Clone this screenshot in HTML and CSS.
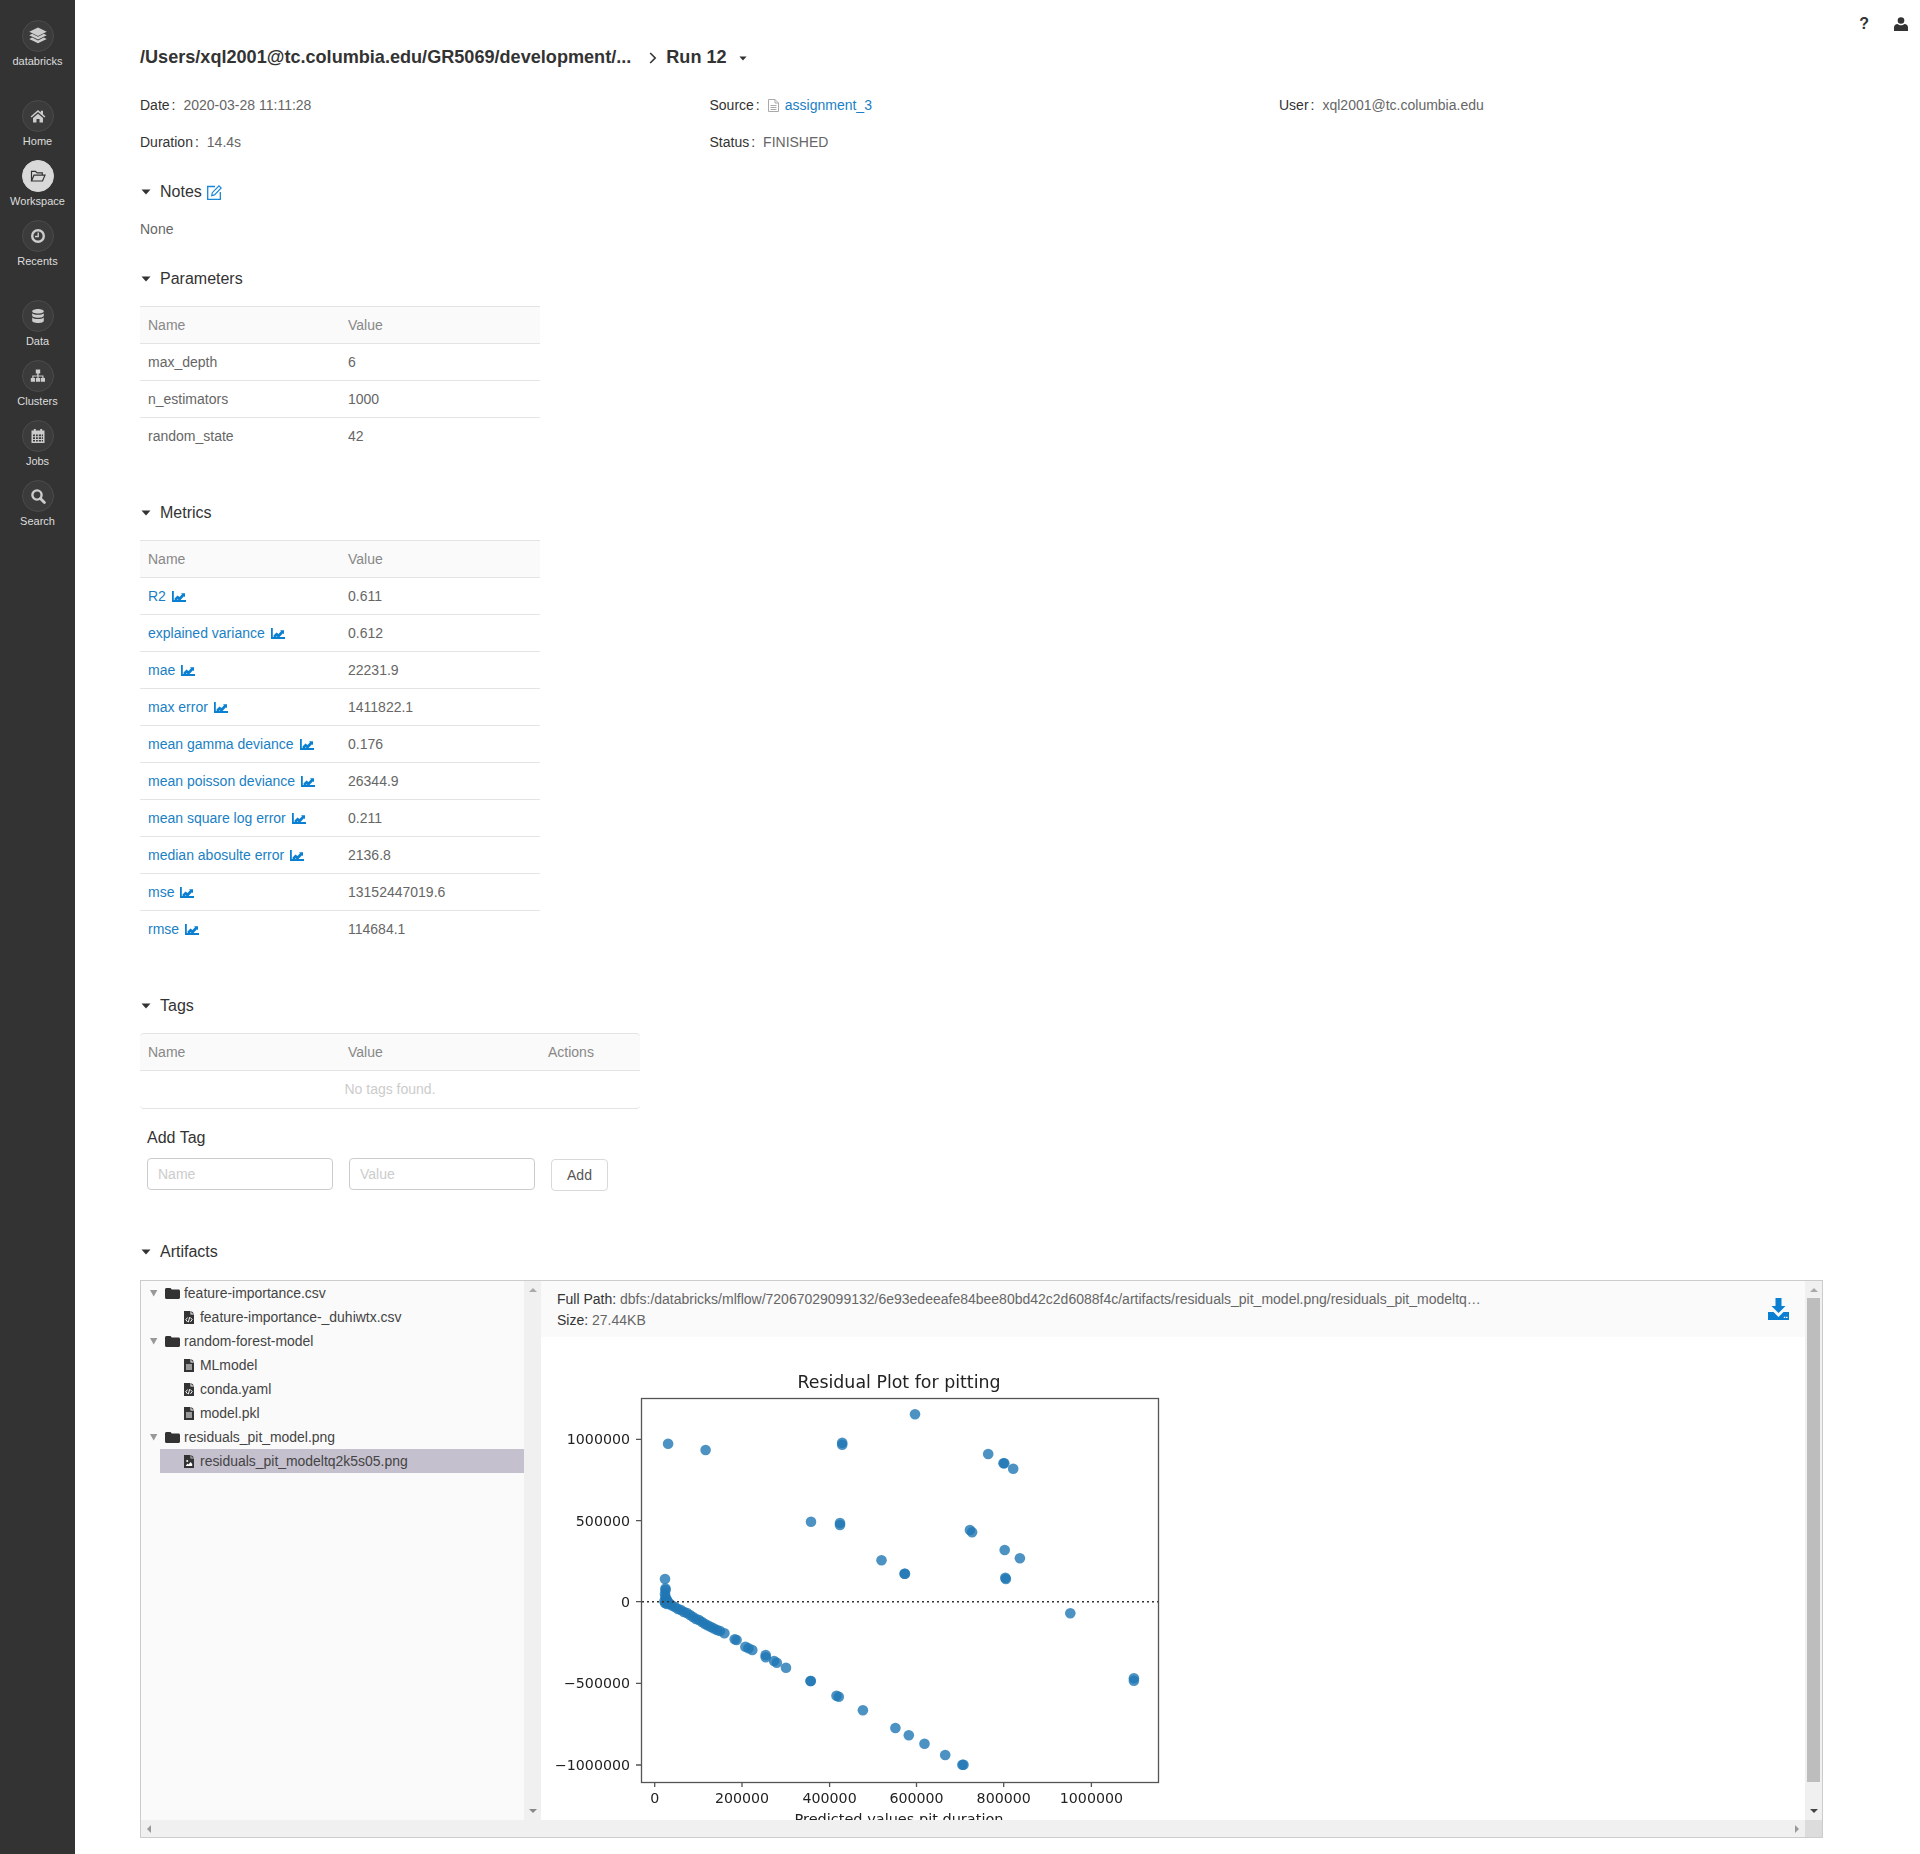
FILE: index.html
```html
<!DOCTYPE html>
<html lang="en">
<head>
    <meta charset="UTF-8">
    <title>Run 12 - MLflow</title>
    <link rel="stylesheet" href="styles.css">
</head>
<body>
    <svg class="sprite" aria-hidden="true">
        <symbol id="i-chart" viewBox="0 0 14 11">
            <path d="M.9 0v10H14" fill="none" stroke="currentColor" stroke-width="1.800"/>
            <path d="M2.500 8.500V7.400l3-3 2 1.700 2.500-2.800-1-1h4v4l-1-1-4.400 4.700-2-1.700-1.600 1.700z" fill="currentColor"/>
        </symbol>
        <symbol id="i-caret" viewBox="0 0 10 6">
            <path d="M.5.5h9L5 5.500z" fill="currentColor"/>
        </symbol>
        <symbol id="i-folder" viewBox="0 0 15 11">
            <path d="M1.500 0h4l1.300 1.400h6.700c.8 0 1.500.7 1.500 1.500v6.600c0 .8-.7 1.500-1.500 1.500h-12C.7 11 0 10.300 0 9.500v-8C0 .7.700 0 1.500 0z" fill="currentColor"/>
        </symbol>
        <symbol id="i-file-code" viewBox="0 0 10 13">
            <path d="M0 0h6.500v3.500H10V13H0zM7.400 0 10 2.600H7.400z" fill="currentColor"/>
            <path d="M3.600 6.500 1.800 8.700l1.800 2.200M6.400 6.500l1.800 2.200-1.800 2.200M5.600 6.200l-1.200 5" fill="none" stroke="#fff" stroke-width="1"/>
        </symbol>
        <symbol id="i-file-text" viewBox="0 0 10 13">
            <path d="M0 0h6.500v3.500H10V13H0zM7.400 0 10 2.600H7.400z" fill="currentColor"/>
            <path d="M2 6h6M2 8h6M2 10h6" stroke="#fff" stroke-width="1"/>
        </symbol>
        <symbol id="i-file-image" viewBox="0 0 10 13">
            <path d="M0 0h6.500v3.500H10V13H0zM7.400 0 10 2.600H7.400z" fill="currentColor"/>
            <path d="M1.800 11h6.400V9L6.600 7 4.500 9.500 3.400 8.500z" fill="#fff"/>
            <circle cx="3.200" cy="6" r="1" fill="#fff"/>
        </symbol>
    </svg>

    <nav class="sidebar">
        <a class="nav-item nav-logo">
            <span class="nav-circle">
                <svg viewBox="0 0 16 16"><path d="M8 .5 15.800 4.300 8 8.100.2 4.300zM.2 7.300 2.800 6 8 8.600 13.200 6l2.600 1.300L8 11.100zM.2 10.600l2.600-1.300L8 11.900l5.200-2.600 2.600 1.300L8 14.500z"/></svg>
            </span>
            databricks
        </a>
        <a class="nav-item">
            <span class="nav-circle">
                <svg viewBox="0 0 16 16"><path d="M8 2 .6 8.400l1 1.100L8 4l6.400 5.500 1-1.100L13 6.300V2.700h-2.200v1.700zM3 10 8 5.700l5 4.300v4.500H9.500V11h-3v3.500H3z"/></svg>
            </span>
            Home
        </a>
        <a class="nav-item active">
            <span class="nav-circle">
                <svg viewBox="0 0 16 16"><path d="M1.500 13V3.300h4l1.500 1.500h5.300v2.400M1.500 13 4 7.200h11L12.500 13z" fill="none" stroke="currentColor" stroke-width="1.200"/></svg>
            </span>
            Workspace
        </a>
        <a class="nav-item">
            <span class="nav-circle">
                <svg viewBox="0 0 16 16"><circle cx="8" cy="8" r="5.800" fill="none" stroke="currentColor" stroke-width="2.400"/><path d="M8.200 4.500v4H5" fill="none" stroke="currentColor" stroke-width="1.400"/></svg>
            </span>
            Recents
        </a>
        <a class="nav-item nav-gap">
            <span class="nav-circle">
                <svg viewBox="0 0 16 16"><path d="M8 1c3.200 0 5.800 1 5.800 2.300S11.200 5.600 8 5.600 2.200 4.600 2.200 3.300 4.800 1 8 1zM2.200 5.200C3.300 6.300 5.500 6.800 8 6.800s4.700-.5 5.800-1.600v2.300C13.800 8.800 11.200 9.800 8 9.800S2.200 8.800 2.200 7.500zM2.200 9.400c1.100 1.100 3.300 1.600 5.800 1.600s4.700-.5 5.800-1.600v3.300C13.800 14 11.200 15 8 15s-5.800-1-5.800-2.300z"/></svg>
            </span>
            Data
        </a>
        <a class="nav-item">
            <span class="nav-circle">
                <svg viewBox="0 0 16 16"><path d="M5.800 1.500h4.400v4H8.600v2h4.900v2.500h1.500v3.800h-4.200V10h1.500V8.600H8.600V10h1.500v3.800H5.900V10h1.500V8.600H3.500V10H5v3.800H.8V10h1.500V7.500h4.900v-2H5.800z"/></svg>
            </span>
            Clusters
        </a>
        <a class="nav-item">
            <span class="nav-circle">
                <svg viewBox="0 0 16 16"><path d="M1.500 2.500h2.300V1h2v1.500h4.400V1h2v1.500h2.300v12.500h-13zM3 6.500v1.800h2V6.500zm3 0v1.800h1.800V6.500zm2.800 0v1.800H11V6.500zm3 0v1.800H13V6.500zM3 9.300v1.800h2V9.300zm3 0v1.800h1.800V9.300zm2.800 0v1.800H11V9.300zm3 0v1.800H13V9.300zM3 12.100v1.500h2v-1.500zm3 0v1.500h1.800v-1.500zm2.800 0v1.500H11v-1.500zm3 0v1.500H13v-1.500z" fill-rule="evenodd"/></svg>
            </span>
            Jobs
        </a>
        <a class="nav-item">
            <span class="nav-circle">
                <svg viewBox="0 0 16 16"><circle cx="7" cy="7" r="4.600" fill="none" stroke="currentColor" stroke-width="2.400"/><path d="m10.400 10.400 4 4" stroke="currentColor" stroke-width="2.800" stroke-linecap="round"/></svg>
            </span>
            Search
        </a>
    </nav>

    <main class="main">
        <div class="top-bar">
            <span class="help-icon">?</span>
            <svg class="user-icon" viewBox="0 0 14 14"><circle cx="7" cy="3.500" r="3.300"/><path d="M0 14v-3.500C0 8.300 1.500 7 3.500 7c1 .9 2.200 1.300 3.500 1.300S9.500 7.900 10.500 7c2 0 3.500 1.300 3.500 3.500V14z"/></svg>
        </div>

        <div class="content">
            <!-- run title -->
            <div class="title-row">
                <h1 class="title">/Users/xql2001@tc.columbia.edu/GR5069/development/...</h1>
                <svg class="title-chevron" viewBox="0 0 8 12"><path d="m1.200 1 5 5-5 5" fill="none" stroke="currentColor" stroke-width="1.600"/></svg>
                <h1 class="title">Run 12</h1>
                <svg class="title-caret"><use href="#i-caret"/></svg>
            </div>

            <div class="descriptions">
                <div class="desc-item"><span class="desc-label">Date</span><span class="desc-value">2020-03-28 11:11:28</span></div>
                <div class="desc-item">
                    <span class="desc-label">Source</span>
                    <svg class="source-icon" viewBox="0 0 11 13"><path d="M.5.500h6.500l3.500 3.500v8.500H.5zM7 .5V4h3.500M2.500 6.500h6M2.500 8.500h6M2.500 10.500h6" fill="none" stroke="currentColor"/></svg>
                    <a class="link">assignment_3</a>
                </div>
                <div class="desc-item"><span class="desc-label">User</span><span class="desc-value">xql2001@tc.columbia.edu</span></div>
                <div class="desc-item"><span class="desc-label">Duration</span><span class="desc-value">14.4s</span></div>
                <div class="desc-item"><span class="desc-label">Status</span><span class="desc-value">FINISHED</span></div>
            </div>

            <h2 class="section-head head-notes">
                <svg class="head-caret"><use href="#i-caret"/></svg>Notes
                <svg class="edit-icon" viewBox="0 0 15 15"><path d="M8 1.500H.7v12.800h12.600V7" fill="none" stroke="currentColor" stroke-width="1.300"/><path d="m12 .8 2.200 2.200-6.700 6.900-2.800.7.600-2.900z" fill="none" stroke="currentColor" stroke-width="1.200"/></svg>
            </h2>
            <p class="notes-text">None</p>

            <h2 class="section-head head-params"><svg class="head-caret"><use href="#i-caret"/></svg>Parameters</h2>
            <table class="data-table">
                <tr><th>Name</th><th>Value</th></tr>
                <tr><td>max_depth</td><td>6</td></tr>
                <tr><td>n_estimators</td><td>1000</td></tr>
                <tr><td>random_state</td><td>42</td></tr>
            </table>

            <h2 class="section-head head-table"><svg class="head-caret"><use href="#i-caret"/></svg>Metrics</h2>
            <table class="data-table">
                <tr><th>Name</th><th>Value</th></tr>
                <tr><td><a class="link">R2<svg class="chart-icon"><use href="#i-chart"/></svg></a></td><td>0.611</td></tr>
                <tr><td><a class="link">explained variance<svg class="chart-icon"><use href="#i-chart"/></svg></a></td><td>0.612</td></tr>
                <tr><td><a class="link">mae<svg class="chart-icon"><use href="#i-chart"/></svg></a></td><td>22231.9</td></tr>
                <tr><td><a class="link">max error<svg class="chart-icon"><use href="#i-chart"/></svg></a></td><td>1411822.1</td></tr>
                <tr><td><a class="link">mean gamma deviance<svg class="chart-icon"><use href="#i-chart"/></svg></a></td><td>0.176</td></tr>
                <tr><td><a class="link">mean poisson deviance<svg class="chart-icon"><use href="#i-chart"/></svg></a></td><td>26344.9</td></tr>
                <tr><td><a class="link">mean square log error<svg class="chart-icon"><use href="#i-chart"/></svg></a></td><td>0.211</td></tr>
                <tr><td><a class="link">median abosulte error<svg class="chart-icon"><use href="#i-chart"/></svg></a></td><td>2136.8</td></tr>
                <tr><td><a class="link">mse<svg class="chart-icon"><use href="#i-chart"/></svg></a></td><td>13152447019.6</td></tr>
                <tr><td><a class="link">rmse<svg class="chart-icon"><use href="#i-chart"/></svg></a></td><td>114684.1</td></tr>
            </table>

            <h2 class="section-head head-table"><svg class="head-caret"><use href="#i-caret"/></svg>Tags</h2>
            <table class="data-table tags-table">
                <tr><th>Name</th><th>Value</th><th>Actions</th></tr>
                <tr><td class="empty-cell" colspan="3">No tags found.</td></tr>
            </table>

            <div class="add-tag">
                <h3 class="add-tag-title">Add Tag</h3>
                <form class="add-tag-form">
                    <input class="tag-input" type="text" placeholder="Name">
                    <input class="tag-input" type="text" placeholder="Value">
                    <button class="tag-btn" type="button">Add</button>
                </form>
            </div>

            <h2 class="section-head head-artifacts"><svg class="head-caret"><use href="#i-caret"/></svg>Artifacts</h2>
            <div class="artifacts">
                <div class="artifacts-top">
                    <ul class="tree">
                        <li class="tree-folder"><svg class="tree-caret" viewBox="0 0 8 8"><path d="M0 1h7.400L3.700 7.500z"/></svg><svg class="folder-icon"><use href="#i-folder"/></svg>feature-importance.csv</li>
                        <li class="tree-file"><svg class="file-icon"><use href="#i-file-code"/></svg>feature-importance-_duhiwtx.csv</li>
                        <li class="tree-folder"><svg class="tree-caret" viewBox="0 0 8 8"><path d="M0 1h7.400L3.700 7.500z"/></svg><svg class="folder-icon"><use href="#i-folder"/></svg>random-forest-model</li>
                        <li class="tree-file"><svg class="file-icon"><use href="#i-file-text"/></svg>MLmodel</li>
                        <li class="tree-file"><svg class="file-icon"><use href="#i-file-code"/></svg>conda.yaml</li>
                        <li class="tree-file"><svg class="file-icon"><use href="#i-file-text"/></svg>model.pkl</li>
                        <li class="tree-folder"><svg class="tree-caret" viewBox="0 0 8 8"><path d="M0 1h7.400L3.700 7.500z"/></svg><svg class="folder-icon"><use href="#i-folder"/></svg>residuals_pit_model.png</li>
                        <li class="tree-file selected"><svg class="file-icon"><use href="#i-file-image"/></svg>residuals_pit_modeltq2k5s05.png</li>
                    </ul>
                    <div class="scroll-v">
                        <span class="arrow-up"></span>
                        <span class="arrow-down"></span>
                    </div>

                    <div class="viewer">
                        <div class="viewer-head">
                            <div class="viewer-info">
                                <div><span class="viewer-label">Full Path:</span> dbfs:/databricks/mlflow/72067029099132/6e93edeeafe84bee80bd42c2d6088f4c/artifacts/residuals_pit_model.png/residuals_pit_modeltq…</div>
                                <div><span class="viewer-label">Size:</span> 27.44KB</div>
                            </div>
                            <svg class="download-icon" viewBox="0 0 21 22"><path d="M7.500 0h6v8h4l-7 7-7-7h4z"/><path d="M0 14h5.500l5 5 5-5H21v8H0z"/><path d="M15.800 19.300h1.500M18 19.300h1.500" stroke="#fff" stroke-width="1.200"/></svg>
                        </div>

                        <!-- viewBox uses page coordinates so points can be read off the plot -->
                        <svg class="plot" viewBox="541 1337 1264 483">
                            <text class="plot-title" x="899" y="1388">Residual Plot for pitting</text>
                            <g class="dots">
                                <circle cx="668.100" cy="1443.700"/><circle cx="705.600" cy="1450"/><circle cx="915" cy="1414.300"/>
                                <circle cx="842.200" cy="1442.700"/><circle cx="842.200" cy="1444.700"/>
                                <circle cx="988.200" cy="1454"/><circle cx="1003.500" cy="1463.300"/><circle cx="1004.300" cy="1463.300"/>
                                <circle cx="1013.200" cy="1468.700"/><circle cx="811" cy="1521.700"/>
                                <circle cx="840" cy="1523"/><circle cx="840" cy="1525"/>
                                <circle cx="969.900" cy="1530"/><circle cx="972.100" cy="1532.300"/>
                                <circle cx="1004.700" cy="1550"/><circle cx="1019.900" cy="1558.300"/><circle cx="881.500" cy="1560.300"/>
                                <circle cx="904.500" cy="1573.700"/><circle cx="905" cy="1573.700"/>
                                <circle cx="1005.300" cy="1577.700"/><circle cx="1005.900" cy="1579"/>
                                <circle cx="665" cy="1579"/><circle cx="665.500" cy="1588.500"/><circle cx="665.500" cy="1590"/>
                                <circle cx="665" cy="1594"/><circle cx="665.500" cy="1597"/><circle cx="666" cy="1599"/><circle cx="664.500" cy="1601"/>
                                <circle cx="666" cy="1602"/><circle cx="665" cy="1603"/><circle cx="667" cy="1600"/><circle cx="668" cy="1602"/><circle cx="667" cy="1604"/>
                                <circle cx="670" cy="1604"/><circle cx="672" cy="1605.500"/><circle cx="675" cy="1607"/><circle cx="678" cy="1609"/>
                                <circle cx="681" cy="1610"/><circle cx="684" cy="1612"/><circle cx="687" cy="1613"/><circle cx="690" cy="1615"/>
                                <circle cx="693" cy="1617"/><circle cx="696" cy="1619"/><circle cx="699" cy="1620"/><circle cx="702" cy="1622"/>
                                <circle cx="705" cy="1624"/><circle cx="708" cy="1625.500"/><circle cx="711" cy="1627"/><circle cx="714" cy="1628.500"/>
                                <circle cx="717" cy="1630"/><circle cx="720" cy="1631"/><circle cx="724.400" cy="1633.300"/>
                                <circle cx="734.700" cy="1639.300"/><circle cx="736.600" cy="1640"/>
                                <circle cx="745.400" cy="1646.700"/><circle cx="748.500" cy="1648.300"/><circle cx="752.300" cy="1650"/>
                                <circle cx="765.700" cy="1655"/><circle cx="765.700" cy="1657.300"/><circle cx="774.100" cy="1661"/><circle cx="776.800" cy="1662.700"/>
                                <circle cx="786" cy="1667.700"/><circle cx="810.500" cy="1681"/><circle cx="810.800" cy="1681"/>
                                <circle cx="836.500" cy="1695.700"/><circle cx="838.800" cy="1696.700"/><circle cx="862.900" cy="1710.300"/>
                                <circle cx="895.400" cy="1728"/><circle cx="908.800" cy="1735.300"/><circle cx="924.500" cy="1743.700"/><circle cx="945.200" cy="1755"/>
                                <circle cx="962.400" cy="1764.700"/><circle cx="963.500" cy="1764.700"/>
                                <circle cx="1070.300" cy="1613.300"/><circle cx="1133.900" cy="1678.300"/><circle cx="1133.900" cy="1680.700"/>
                            </g>
                            <line class="plot-zero" x1="642" y1="1601.700" x2="1158" y2="1601.700"/>
                            <rect class="plot-frame" x="641.500" y="1398.500" width="517" height="384"/>
                            <path class="plot-frame" d="M636 1439.300h5M636 1520.700h5M636 1601.700h5M636 1683.300h5M636 1765h5M654.700 1782v5M742 1782v5M829.600 1782v5M916.500 1782v5M1003.700 1782v5M1091.400 1782v5"/>
                            <g class="ticks-y">
                                <text x="630" y="1444.300">1000000</text>
                                <text x="630" y="1525.700">500000</text>
                                <text x="630" y="1606.700">0</text>
                                <text x="630" y="1688.300">−500000</text>
                                <text x="630" y="1770">−1000000</text>
                            </g>
                            <g class="ticks-x">
                                <text x="654.700" y="1803">0</text>
                                <text x="742" y="1803">200000</text>
                                <text x="829.600" y="1803">400000</text>
                                <text x="916.500" y="1803">600000</text>
                                <text x="1003.700" y="1803">800000</text>
                                <text x="1091.400" y="1803">1000000</text>
                                <text class="plot-xlabel" x="899" y="1823.500">Predicted values pit duration</text>
                            </g>
                        </svg>
                    </div>

                    <div class="scroll-v">
                        <span class="arrow-up"></span>
                        <span class="scroll-thumb"></span>
                        <span class="arrow-down arrow-dark"></span>
                    </div>
                </div>

                <div class="scroll-h">
                    <span class="arrow-left"></span>
                    <span class="arrow-right"></span>
                    <span class="scroll-corner"></span>
                </div>
            </div>
        </div>
    </main>
</body>
</html>
```

FILE: styles.css
```css
html, body {
    margin: 0;
    padding: 0;
}
body {
    display: flex;
    min-height: 100vh;
    font-family: "Liberation Sans", Arial, sans-serif;
    font-size: 14px;
    color: #666;
    background: #fff;
}
.sprite {
    display: none;
}
a {
    text-decoration: none;
}
.link {
    color: #1a7fc4;
}

/* left nav */
.sidebar {
    flex: 0 0 75px;
    background: #333;
    padding-top: 20px;
    box-sizing: border-box;
}
.nav-item {
    display: flex;
    flex-direction: column;
    align-items: center;
    height: 60px;
    color: #ddd;
    font-size: 11px;
    line-height: 18px;
}
.nav-logo {
    margin-bottom: 20px;
}
.nav-gap {
    margin-top: 20px;
}
.nav-circle {
    width: 32px;
    height: 32px;
    box-sizing: border-box;
    border: 1px solid #4b4b4b;
    border-radius: 50%;
    background: #3b3b3b;
    color: #ccc;
    display: flex;
    align-items: center;
    justify-content: center;
}
.nav-circle svg {
    width: 16px;
    height: 16px;
    fill: currentColor;
}
.nav-logo .nav-circle svg {
    width: 18px;
    height: 18px;
}
.nav-item.active .nav-circle {
    background: #d9d9d9;
    border-color: #d9d9d9;
    color: #333;
}

/* page */
.main {
    flex: 1;
    min-width: 0;
}
.top-bar {
    height: 46px;
    display: flex;
    justify-content: flex-end;
    align-items: flex-start;
    padding: 16px 12px 0 0;
    box-sizing: border-box;
    color: #333;
}
.help-icon {
    font-size: 16px;
    font-weight: bold;
    line-height: 16px;
    margin-right: 25px;
}
.user-icon {
    width: 14px;
    height: 14px;
    margin-top: 1px;
    fill: currentColor;
}
.content {
    padding: 0 97px 0 65px;
}
.title-row {
    display: flex;
    align-items: center;
    height: 22px;
    color: #333;
}
.title {
    margin: 0;
    font-size: 18.1px;
    line-height: 22px;
    font-weight: bold;
    color: #333;
}
.title-chevron {
    width: 8px;
    height: 12px;
    margin: 1px 9px 0 18px;
}
.title-caret {
    width: 8px;
    height: 5px;
    margin: 3px 0 0 12px;
}

.descriptions {
    display: grid;
    grid-template-columns: repeat(3, 569.5px);
    grid-auto-rows: 37px;
    margin-top: 19px;
}
.desc-item {
    display: flex;
    align-items: center;
    line-height: 37px;
}
.desc-label {
    color: #333;
}
.desc-label::after {
    content: ":";
    margin: 0 8px 0 2px;
}
.source-icon {
    width: 11px;
    height: 13px;
    margin-right: 6px;
    color: #aaa;
}

.section-head {
    display: flex;
    align-items: center;
    margin: 0;
    height: 24px;
    font-size: 16px;
    font-weight: normal;
    color: #333;
}
.head-caret {
    width: 10px;
    height: 6px;
    margin: 0 9px 0 1px;
    color: #333;
}
.head-notes {
    margin-top: 19px;
}
.head-params {
    margin-top: 19px;
}
.head-table {
    margin-top: 46px;
}
.head-artifacts {
    margin-top: 49px;
}
.edit-icon {
    width: 15px;
    height: 15px;
    margin-left: 5px;
    color: #1a87d6;
}
.notes-text {
    margin: 7px 0 0;
    line-height: 37px;
}

/* tables */
.data-table {
    table-layout: fixed;
    width: 400px;
    margin-top: 15px;
    border-collapse: separate;
    border-spacing: 0;
}
.data-table th,
.data-table td {
    box-sizing: border-box;
    width: 200px;
    height: 37px;
    padding: 0 8px;
    text-align: left;
    font-weight: normal;
    border-bottom: 1px solid #e4e4e4;
}
.data-table th {
    height: 38px;
    background: #fafafa;
    border-top: 1px solid #e4e4e4;
    color: #888;
}
.data-table tr:last-child td {
    border-bottom-color: transparent;
}
.chart-icon {
    width: 14px;
    height: 11px;
    margin-left: 6px;
    vertical-align: -1px;
    color: #0b7fd1;
}
.tags-table {
    width: 500px;
}
.tags-table th:nth-child(3) {
    width: 100px;
}
.tags-table th:first-child {
    border-top-left-radius: 4px;
}
.tags-table th:last-child {
    border-top-right-radius: 4px;
}
.tags-table tr:last-child td {
    height: 38px;
    padding-bottom: 2px;
    border-bottom-color: #e4e4e4;
    border-radius: 0 0 4px 4px;
}
.empty-cell {
    text-align: center !important;
    color: #ccc;
}

.add-tag {
    margin: 17px 0 0 7px;
}
.add-tag-title {
    margin: 0;
    font-size: 16px;
    line-height: 24px;
    font-weight: normal;
    color: #333;
}
.add-tag-form {
    display: flex;
    align-items: flex-start;
    gap: 16px;
    margin-top: 8px;
}
.tag-input {
    width: 186px;
    height: 32px;
    box-sizing: border-box;
    padding: 0 10px;
    border: 1px solid #ccc;
    border-radius: 4px;
    font: inherit;
}
.tag-input::placeholder {
    color: #ccc;
}
.tag-btn {
    width: 57px;
    height: 32px;
    margin-top: 1px;
    background: #fff;
    border: 1px solid #d9d9d9;
    border-radius: 4px;
    font: inherit;
    color: #555;
}

/* artifacts */
.artifacts {
    margin-top: 16px;
    height: 558px;
    box-sizing: border-box;
    border: 1px solid #ccc;
    display: flex;
    flex-direction: column;
}
.artifacts-top {
    display: flex;
    height: 539px;
}
.tree {
    flex: 0 0 383px;
    margin: 0;
    padding: 0;
    list-style: none;
    background: #fafafa;
    color: #444;
    font-size: 13.95px;
}
.tree li {
    display: flex;
    align-items: center;
    height: 24px;
}
.tree-folder {
    padding-left: 9px;
}
.tree-file {
    margin-left: 19px;
    padding-left: 24px;
}
.tree-file.selected {
    background: #c4c0ce;
}
.tree-caret {
    width: 8px;
    height: 8px;
    fill: #999;
    margin-right: 7px;
}
.folder-icon {
    width: 15px;
    height: 11px;
    margin-right: 4px;
    color: #333;
}
.file-icon {
    width: 10px;
    height: 13px;
    margin-right: 6px;
    color: #333;
}

.scroll-v {
    flex: 0 0 17px;
    box-sizing: border-box;
    padding: 7px 2px;
    background: #f0f0f0;
    display: flex;
    flex-direction: column;
    align-items: center;
}
.scroll-thumb {
    width: 13px;
    height: 484px;
    margin-top: 6px;
    background: #bdbdbd;
}
.arrow-up,
.arrow-down {
    width: 0;
    height: 0;
    border-left: 4px solid transparent;
    border-right: 4px solid transparent;
}
.arrow-up {
    border-bottom: 4px solid #aaa;
}
.arrow-down {
    margin-top: auto;
    border-top: 4px solid #888;
}
.arrow-dark {
    border-top-color: #444;
}
.scroll-h {
    display: flex;
    align-items: center;
    height: 17px;
    background: #f0f0f0;
}
.arrow-left,
.arrow-right {
    width: 0;
    height: 0;
    border-top: 4px solid transparent;
    border-bottom: 4px solid transparent;
}
.arrow-left {
    margin-left: 6px;
    border-right: 4px solid #999;
}
.arrow-right {
    margin-left: auto;
    margin-right: 6px;
    border-left: 4px solid #999;
}
.scroll-corner {
    width: 17px;
    height: 17px;
    background: #dcdcdc;
}

.viewer {
    flex: 0 0 1264px;
    min-width: 0;
}
.viewer-head {
    height: 56px;
    box-sizing: border-box;
    padding: 8px 16px 0;
    background: #fafafa;
    display: flex;
    justify-content: space-between;
    line-height: 21px;
}
.viewer-label {
    color: #333;
}
.download-icon {
    width: 21px;
    height: 22px;
    margin-top: 9px;
    fill: #0b7fd1;
}
.plot {
    display: block;
    width: 1264px;
    height: 483px;
    font-family: "DejaVu Sans", sans-serif;
    filter: blur(.3px);
}
.plot-title {
    font-size: 17.4px;
    text-anchor: middle;
    fill: #222;
}
.dots circle {
    r: 5.3px;
    fill: #1f77b4;
    fill-opacity: .8;
}
.plot-zero {
    stroke: #333;
    stroke-width: 1.5;
    stroke-dasharray: 2 3;
}
.plot-frame {
    fill: none;
    stroke: #555;
    stroke-width: 1.3;
}
.ticks-y text,
.ticks-x text {
    font-size: 14.2px;
    fill: #222;
}
.ticks-y text {
    text-anchor: end;
}
.ticks-x text {
    text-anchor: middle;
}
.ticks-x .plot-xlabel {
    font-size: 14.5px;
}
```
